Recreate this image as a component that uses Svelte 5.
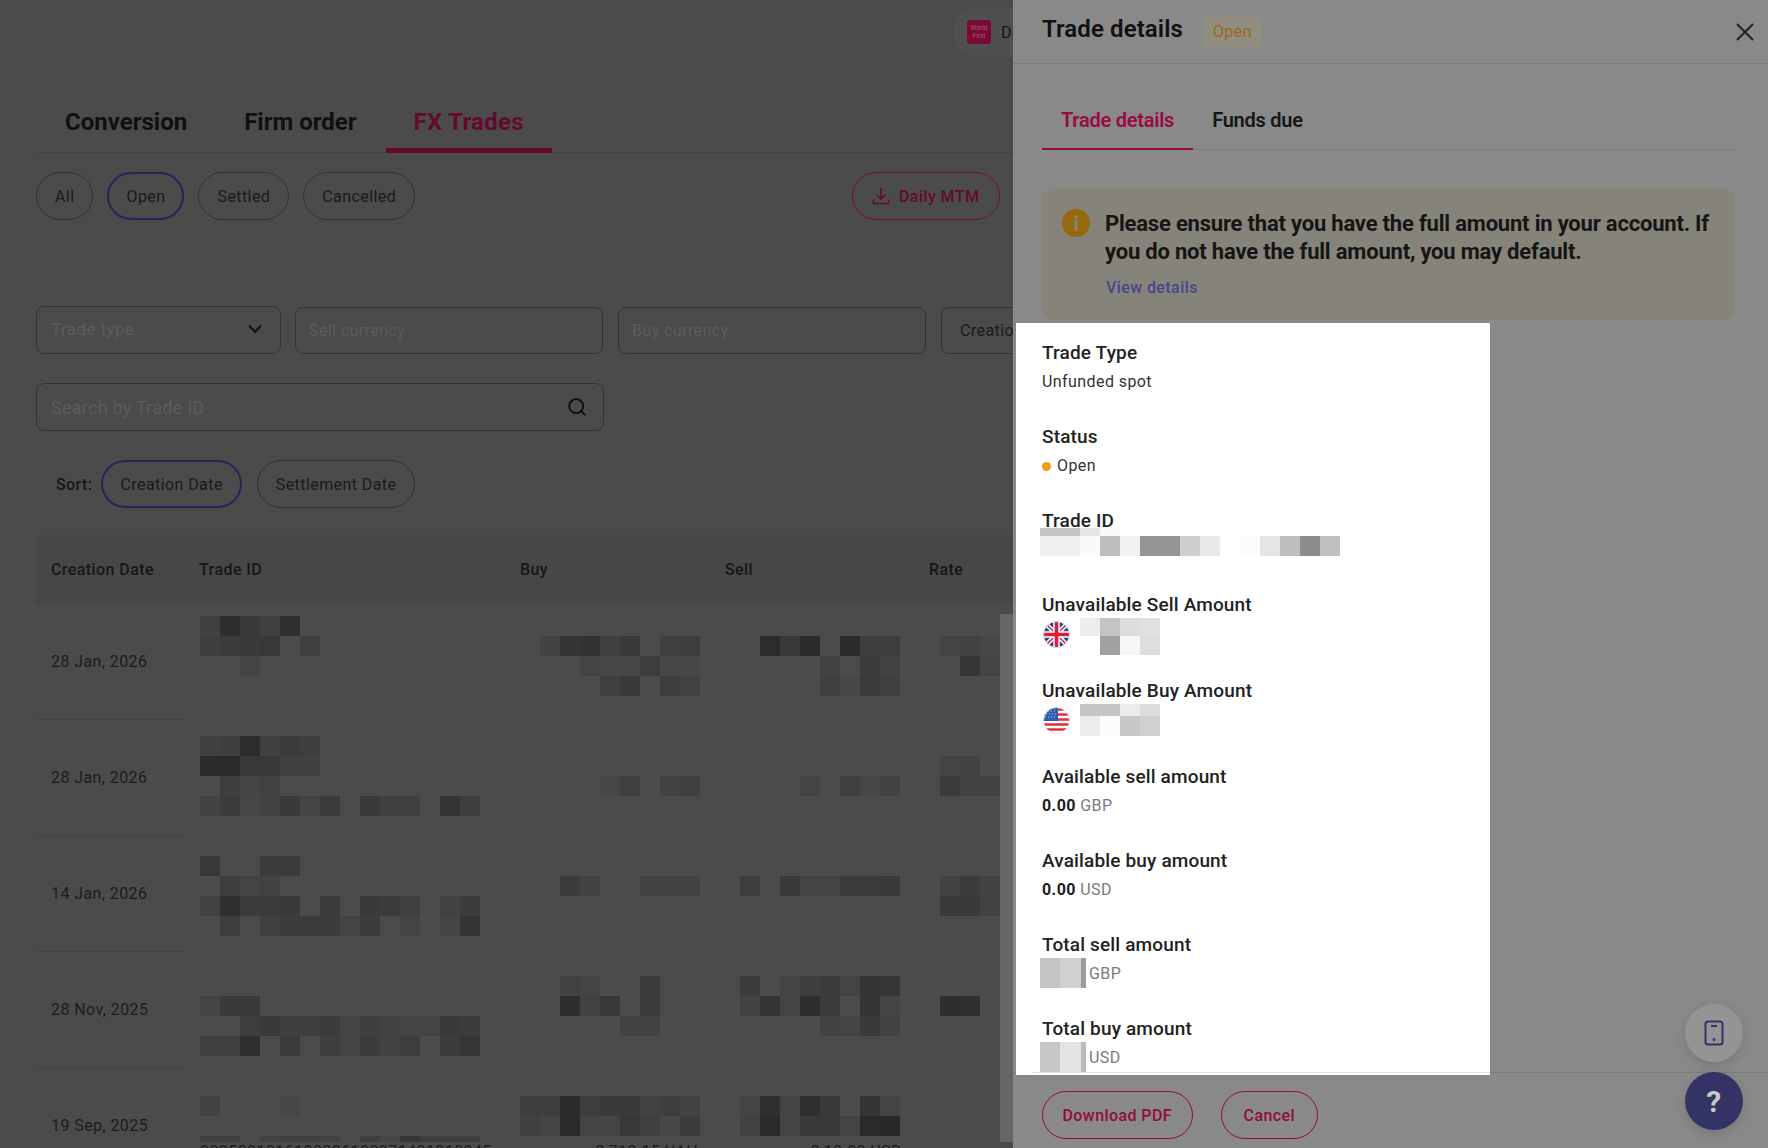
<script>
	// blurred-out values over the table: [y, first x, grey per 20px cell, "--" skips one]
	const BLUR = [
		[616, 200, "41 2e 3a 40 30"],
		[636, 200, "3e 3c 3a 38 -- 3f"],
		[656, 240, "45"],
		[636, 540, "43 35 32 40 3a -- 40 3e"],
		[656, 580, "44 47 47 3d 47 48"],
		[676, 600, "40 3a -- 3e 42"],
		[636, 760, "2c 39 2b -- 2b 3e 3e"],
		[656, 820, "42 -- 3c 42"],
		[676, 820, "40 48 3b 40"],
		[636, 940, "44 42 46"],
		[656, 960, "36 44"],

		[736, 200, "40 3e 2d 41 3c 3e"],
		[756, 200, "2b 2a 38 38 3f 40"],
		[776, 220, "3e 45 42"],
		[796, 200, "42 3c 46 42 3a 44 3c -- 3a 40 40 -- 34 3e"],
		[776, 600, "46 3f -- 42 40"],
		[776, 800, "44 -- 40 47 42"],
		[756, 940, "44 42"],
		[776, 940, "3c 42 42"],

		[856, 200, "38 -- -- 3c 3c"],
		[876, 220, "3e 44 42"],
		[896, 200, "42 30 3c 3c 3a -- 3c -- 3a 3c 40 -- 42 3c"],
		[916, 220, "3e -- 40 3c 3c 3c 44 3c -- 44 -- 45 34"],
		[876, 560, "3c 42 -- -- 42 42 42"],
		[876, 740, "3e -- 3a 44 44 3c 3c 3a"],
		[876, 940, "42 3c 42"],
		[896, 940, "3a 3a 42"],

		[976, 560, "42 44 -- -- 3c"],
		[976, 740, "3c -- 44 3e 3c 44 34 36"],
		[996, 200, "44 3a 3a"],
		[996, 560, "2e 42 38 -- 3c"],
		[996, 740, "42 34 44 2e 3c -- 34 44"],
		[996, 940, "2e 30"],
		[1016, 240, "3e 3a 3e 3e 3c 44 3e 42 44 44 3a 3c"],
		[1016, 620, "42 42"],
		[1016, 820, "42 44 3a 42"],
		[1036, 200, "40 40 30 -- 3c -- 3e 44 3c 42 3e -- 3c 36"],

		[1096, 200, "42 -- -- -- 46"],
		[1096, 520, "3e 3e 2b 3e 3a 3a 42 3e 42"],
		[1096, 740, "44 30 44 30 3a -- 34 44"],
		[1116, 520, "40 44 2b 44 44 38 40 48 3c"],
		[1116, 740, "42 2b 44 3a 3a 44 2a 28"],
		[1136, 200, "40 40 -- 42 40 40 42 -- 3e 46 36 3e 3e 3e", 6]
	];

	const blurCells = BLUR.flatMap(([y, x, greys, h = 20]) =>
		greys.split(" ").map((grey, i) => ({ y, x: x + i * 20, grey, h })).filter((c) => c.grey !== "--")
	);

	const chips = ["All", "Open", "Settled", "Cancelled"];
	const rows = ["28 Jan, 2026", "28 Jan, 2026", "14 Jan, 2026", "28 Nov, 2025", "19 Sep, 2025"];

	const sellBlur = [
		{ h: 18, cells: ["#ececec", "#c4c4c4", "#dcdcdc", "#e0e0e0"] },
		{ h: 19, cells: ["#ffffff", "#a0a0a0", "#f6f6f6", "#dedede"] }
	];
	const buyBlur = [
		{ h: 12, cells: ["#c4c4c4", "#c4c4c4", "#ececec", "#dcdcdc"] },
		{ h: 20, cells: ["#ececec", "#fcfcfc", "#c8c8c8", "#d0d0d0"] }
	];
	const idBlur = [
		{ h: 8, cells: ["#c4c4c4", "#c4c4c4", "#e6e6e6", "#fafafa"] },
		{
			h: 20,
			cells: ["#efefef", "#efefef", "#fafafa", "#bdbdbd", "#f2f2f2", "#959595", "#959595", "#cfcfcf", "#e9e9e9", "#ffffff", "#fcfcfc", "#e5e5e5", "#bebebe", "#8c8c8c", "#c0c0c0"]
		}
	];
</script>

{#snippet blur(lines, width = 20)}
	<div class="blur">
		{#each lines as line}
			<div class="blur-line" style="height:{line.h}px">
				{#each line.cells as color}
					<span style="width:{width}px;background:{color}"></span>
				{/each}
			</div>
		{/each}
	</div>
{/snippet}

<div class="page">
	<main class="main">
		<div class="topbar">
			<div class="brand">
				<span class="logo">World<br />First</span>
				<span class="brand-name">Demo</span>
			</div>
		</div>

		<nav class="tabs">
			<span class="tab">Conversion</span>
			<span class="tab">Firm order</span>
			<span class="tab active">FX Trades</span>
		</nav>

		<div class="chip-row">
			<div class="chips">
				{#each chips as chip}
					<span class="chip" class:selected={chip === "Open"}>{chip}</span>
				{/each}
			</div>
			<span class="mtm">
				<svg width="20" height="20" viewBox="0 0 20 20" fill="none" stroke="currentColor" stroke-width="1.5">
					<path d="M10 2v11M5.8 9l4.2 4.2L14.2 9M2.5 13.5v4h15v-4" />
				</svg>
				Daily MTM
			</span>
		</div>

		<div class="filters">
			<div class="field-box type">
				<span class="placeholder">Trade type</span>
				<svg width="16" height="10" viewBox="0 0 16 10" fill="none" stroke="#111" stroke-width="2">
					<path d="M2 1.5l6 6.5 6-6.5" />
				</svg>
			</div>
			<div class="field-box wide"><span class="placeholder">Sell currency</span></div>
			<div class="field-box wide"><span class="placeholder">Buy currency</span></div>
			<div class="field-box created">Creation date</div>
		</div>

		<div class="search">
			<span class="placeholder">Search by Trade ID</span>
			<svg width="20" height="20" viewBox="0 0 20 20" fill="none" stroke="#0c0c0c" stroke-width="1.8">
				<circle cx="9.2" cy="9.2" r="7" />
				<path d="M14.2 14.2l4 4" />
			</svg>
		</div>

		<div class="sort">
			<span class="sort-label">Sort:</span>
			<span class="chip selected">Creation Date</span>
			<span class="chip">Settlement Date</span>
		</div>

		<div class="table">
			<div class="thead">
				<span>Creation Date</span>
				<span class="divided">Trade ID</span>
				<span class="divided">Buy</span>
				<span class="divided">Sell</span>
				<span class="divided">Rate</span>
			</div>
			{#each rows as date, i}
				<div class="trow">
					<span class="date">{date}</span>
					{#if i === 4}
						<span class="clipped id">2025001016180006100071401010245</span>
						<span class="clipped amount">3,712.15 UAH</span>
						<span class="clipped amount">3,10.00 USD</span>
					{/if}
				</div>
			{/each}
		</div>

		<div class="blur-layer">
			{#each blurCells as c}
				<span style="left:{c.x}px;top:{c.y}px;height:{c.h}px;background:#{c.grey}{c.grey}{c.grey}"></span>
			{/each}
		</div>
		<div class="scrollbar"></div>
	</main>

	<aside class="drawer">
		<header class="drawer-head">
			<h2>Trade details</h2>
			<span class="badge">Open</span>
			<svg class="close" width="20" height="20" viewBox="0 0 20 20" fill="none" stroke="#222" stroke-width="2">
				<path d="M2 2l16 16M18 2L2 18" />
			</svg>
		</header>

		<nav class="drawer-tabs">
			<span class="drawer-tab active">Trade details</span>
			<span class="drawer-tab">Funds due</span>
		</nav>

		<section class="alert">
			<svg class="alert-icon" width="28" height="28" viewBox="0 0 28 28">
				<circle cx="14" cy="14" r="14" fill="#96690f" />
				<circle cx="14" cy="8" r="1.8" fill="#8a8579" />
				<rect x="12.5" y="11.5" width="3" height="10" fill="#8a8579" />
			</svg>
			<div>
				<p>Please ensure that you have the full amount in your account. If you do not have the full amount, you may default.</p>
				<span class="view">View details</span>
			</div>
		</section>

		<section class="details">
			<div class="item">
				<div class="label">Trade Type</div>
				<div class="value">Unfunded spot</div>
			</div>
			<div class="item">
				<div class="label">Status</div>
				<div class="value status"><i></i>Open</div>
			</div>
			<div class="item">
				<div class="label">Trade ID</div>
				<div class="id-blur">{@render blur(idBlur)}</div>
			</div>
			<div class="item tall">
				<div class="label">Unavailable Sell Amount</div>
				<div class="flag-row">
					<svg width="27" height="27" viewBox="0 0 27 27">
						<defs><clipPath id="uk"><circle cx="13.5" cy="13.5" r="13" /></clipPath></defs>
						<g clip-path="url(#uk)">
							<rect width="27" height="27" fill="#1f4a9c" />
							<path d="M0 0l27 27M27 0L0 27" stroke="#fff" stroke-width="4.5" />
							<path d="M0 0l27 27M27 0L0 27" stroke="#d3213f" stroke-width="1.5" />
							<path d="M13.5 0v27M0 13.5h27" stroke="#fff" stroke-width="6.5" />
							<path d="M13.5 0v27M0 13.5h27" stroke="#d3213f" stroke-width="3.6" />
						</g>
						<circle cx="13.5" cy="13.5" r="13" fill="none" stroke="#e4e4e4" />
					</svg>
					{@render blur(sellBlur)}
				</div>
			</div>
			<div class="item tall">
				<div class="label">Unavailable Buy Amount</div>
				<div class="flag-row">
					<svg width="27" height="27" viewBox="0 0 27 27">
						<defs><clipPath id="us"><circle cx="13.5" cy="13.5" r="13" /></clipPath></defs>
						<g clip-path="url(#us)">
							<rect width="27" height="27" fill="#fff" />
							<path d="M0 2.5h27M0 7.5h27M0 12.5h27M0 17.5h27M0 22.5h27" stroke="#dc2f3c" stroke-width="2.5" />
							<rect width="15" height="14" fill="#2d5cb0" />
							<path d="M2 4h12M3 7h11M2 10h12" stroke="#b9cbec" stroke-width="1" stroke-dasharray="1 2" />
						</g>
						<circle cx="13.5" cy="13.5" r="13" fill="none" stroke="#e4e4e4" />
					</svg>
					{@render blur(buyBlur)}
				</div>
			</div>
			<div class="item">
				<div class="label">Available sell amount</div>
				<div class="value"><b>0.00</b> <span class="unit">GBP</span></div>
			</div>
			<div class="item">
				<div class="label">Available buy amount</div>
				<div class="value"><b>0.00</b> <span class="unit">USD</span></div>
			</div>
			<div class="item">
				<div class="label">Total sell amount</div>
				<div class="total-row">
					<div class="total-blur one"></div>
					<span class="unit">GBP</span>
				</div>
			</div>
			<div class="item">
				<div class="label">Total buy amount</div>
				<div class="total-row">
					<div class="total-blur two"></div>
					<span class="unit">USD</span>
				</div>
			</div>
		</section>

		<footer class="drawer-foot">
			<span class="outline">Download PDF</span>
			<span class="outline cancel">Cancel</span>
		</footer>

		<div class="fab phone">
			<svg width="22" height="26" viewBox="0 0 22 26" fill="none" stroke="#33336b" stroke-width="2">
				<rect x="2.5" y="1.5" width="17" height="23" rx="2.5" />
				<path d="M8 6h6" />
				<circle cx="11" cy="19.5" r="0.6" />
			</svg>
		</div>
		<div class="fab help">?</div>
	</aside>
</div>

<style>
	:global(body) {
		margin: 0;
		background: #4b4b4b;
	}

	.page {
		display: flex;
		width: 1768px;
		height: 1148px;
		overflow: hidden;
		font-family: Roboto, "Liberation Sans", sans-serif;
		font-size: 16px;
		letter-spacing: 0.42px;
		color: #161616;
	}

	.main {
		position: relative;
		box-sizing: border-box;
		flex: 0 0 1013px;
		height: 1148px;
		padding: 0 13px 0 36px;
		overflow: hidden;
		background: #4b4b4b;
	}

	.topbar {
		display: flex;
		justify-content: flex-end;
		height: 64px;
		margin-right: -13px;
	}

	.brand {
		display: flex;
		align-items: center;
		box-sizing: border-box;
		width: 60px;
		height: 48px;
		margin-top: 8px;
		padding-left: 14px;
		gap: 10px;
		overflow: hidden;
		background: #4f4f4f;
		border-radius: 24px 0 0 24px;
		flex-shrink: 0;
		white-space: nowrap;
	}

	.logo {
		flex: 0 0 24px;
		height: 24px;
		border-radius: 4px;
		background: #7a0a35;
		color: #a65a75;
		font-size: 6.5px;
		letter-spacing: 0;
		line-height: 7.5px;
		text-align: center;
		padding-top: 5px;
		box-sizing: border-box;
	}

	.brand-name {
		color: #141414;
	}

	.tabs {
		display: flex;
		box-sizing: border-box;
		margin-top: 42px;
		margin-right: -13px;
		border-bottom: 1px solid #424242;
		height: 47px;
	}

	.tab {
		box-sizing: border-box;
		height: 47px;
		padding: 0 28px 0 29px;
		font-size: 24px;
		font-weight: 700;
		line-height: 32px;
		color: #101010;
		letter-spacing: 0;
	}

	.tab:nth-child(2) {
		padding: 0 29px;
	}

	.tab.active {
		padding: 0 28px;
		letter-spacing: 0.25px;
		color: #640a2e;
		border-bottom: 5px solid #640a2e;
	}

	.chip-row {
		display: flex;
		justify-content: space-between;
		margin-top: 19px;
	}

	.chips,
	.sort {
		display: flex;
		gap: 14px;
	}

	.chip {
		box-sizing: border-box;
		display: flex;
		align-items: center;
		height: 48px;
		padding: 0 18px;
		border: 1px solid #343434;
		border-radius: 24px;
		color: #1a1a1a;
		white-space: nowrap;
	}

	.chip.selected {
		border: 2px solid #26255a;
		padding: 0 17px;
	}

	.mtm {
		box-sizing: border-box;
		display: flex;
		align-items: center;
		gap: 8px;
		width: 148px;
		height: 48px;
		padding-left: 18px;
		border: 1px solid #7a0c39;
		border-radius: 24px;
		color: #640a2e;
		font-weight: 500;
		white-space: nowrap;
	}

	.filters {
		display: flex;
		align-items: flex-end;
		gap: 15px;
		margin-top: 86px;
		white-space: nowrap;
	}

	.field-box,
	.search {
		box-sizing: border-box;
		display: flex;
		align-items: center;
		justify-content: space-between;
		height: 47px;
		flex-shrink: 0;
		padding: 0 13px;
		border: 1px solid #343434;
		border-radius: 8px;
	}

	.field-box.type {
		width: 245px;
		height: 48px;
		margin-right: -1px;
		padding: 0 17px 3px 14px;
		font-size: 17px;
	}

	.field-box.wide {
		width: 308px;
	}

	.field-box.created {
		width: 200px;
		padding-left: 18px;
		color: #1a1a1a;
	}

	.placeholder {
		color: #5c5c5c;
	}

	.search {
		width: 568px;
		height: 48px;
		margin-top: 29px;
		padding: 0 16px 0 14px;
		font-size: 18px;
		letter-spacing: 0.25px;
	}

	.sort {
		align-items: center;
		margin-top: 29px;
		margin-left: 20px;
		gap: 15px;
	}

	.sort-label {
		font-weight: 500;
		margin-right: -6px;
	}

	.table {
		margin-top: 27px;
		margin-right: -13px;
	}

	.thead,
	.trow {
		display: grid;
		grid-template-columns: 147px 321px 205px 204px 1fr;
	}

	.thead {
		align-items: center;
		height: 69px;
		background: #474748;
		border-radius: 6px 6px 0 0;
		font-weight: 500;
	}

	.thead span {
		padding-left: 15px;
		line-height: 26px;
	}

	.thead .divided {
		border-left: 1px solid #434344;
	}

	.trow {
		position: relative;
		align-items: center;
		height: 116px;
	}

	.date {
		box-sizing: border-box;
		height: 116px;
		line-height: 115px;
		padding-left: 15px;
		border-bottom: 1px solid #424242;
		color: #1c1c1c;
	}

	.clipped {
		align-self: start;
		margin-top: 74px;
		line-height: 20px;
		color: #1c1c1c;
		white-space: nowrap;
	}

	.clipped.id {
		padding-left: 17px;
	}

	.clipped.amount {
		text-align: right;
		padding-right: 11px;
	}

	.blur-layer {
		position: absolute;
		inset: 0;
		pointer-events: none;
	}

	.blur-layer span {
		position: absolute;
		width: 20px;
	}

	.scrollbar {
		position: absolute;
		top: 614px;
		right: 0;
		width: 13px;
		height: 528px;
		background: #666666;
	}

	.drawer {
		position: relative;
		flex: 0 0 755px;
		height: 1148px;
		background: #898989;
	}

	.drawer-head {
		box-sizing: border-box;
		display: flex;
		align-items: center;
		height: 64px;
		padding: 0 13px 0 29px;
		border-bottom: 1px solid #7b7b7b;
	}

	h2 {
		margin: 0 0 6px;
		font-size: 24px;
		font-weight: 600;
		line-height: 32px;
		letter-spacing: 0.1px;
		color: #111;
	}

	.badge {
		margin-left: 20px;
		padding: 0 10px;
		height: 33px;
		line-height: 33px;
		border-radius: 6px;
		background: #918d80;
		color: #9a6814;
	}

	.close {
		margin-left: auto;
		margin-top: 1px;
	}

	.drawer-tabs {
		display: flex;
		box-sizing: border-box;
		width: 693px;
		height: 86px;
		margin-left: 29px;
		border-bottom: 1px solid #7b7b7b;
	}

	.drawer-tab {
		box-sizing: border-box;
		height: 86px;
		padding: 42px 19px 0;
		font-size: 20px;
		font-weight: 600;
		line-height: 28px;
		letter-spacing: -0.25px;
		color: #161616;
	}

	.drawer-tab.active {
		color: #980a42;
		border-bottom: 2px solid #980a42;
	}

	.alert {
		box-sizing: border-box;
		display: flex;
		gap: 15px;
		width: 693px;
		height: 132px;
		margin: 38px 0 0 29px;
		padding: 22px 20px 0;
		border-radius: 12px;
		background: #86847a;
	}

	.alert-icon {
		flex-shrink: 0;
		margin-top: -1px;
	}

	.alert p {
		margin: 0;
		font-size: 22px;
		font-weight: 700;
		line-height: 28px;
		letter-spacing: -0.2px;
		color: #151515;
	}

	.view {
		display: block;
		margin-top: 10px;
		margin-left: 1px;
		line-height: 24px;
		font-weight: 500;
		color: #47478a;
	}

	.details {
		position: relative;
		z-index: 1;
		box-sizing: border-box;
		width: 474px;
		height: 752px;
		margin: 3px 0 0 3px;
		padding: 16px 0 0 26px;
		overflow: hidden;
		background: #fff;
	}

	.details::after {
		content: "";
		position: absolute;
		left: 16px;
		right: 0;
		top: 749px;
		height: 1px;
		background: #e4e4e4;
	}

	.item {
		height: 84px;
	}

	.item.tall {
		height: 86px;
	}

	.label {
		font-size: 19px;
		font-weight: 500;
		line-height: 28px;
		letter-spacing: 0.15px;
		color: #222;
	}

	.value {
		padding-top: 1px;
		line-height: 28px;
		color: #333;
	}

	.status {
		display: flex;
		align-items: center;
	}

	.status i {
		width: 9px;
		height: 9px;
		margin-right: 6px;
		border-radius: 50%;
		background: #f39c12;
	}

	.value b {
		font-weight: 700;
		color: #1c1c1c;
	}

	.unit {
		color: #7a7a7a;
	}

	.blur {
		display: flex;
		flex-direction: column;
	}

	.blur-line {
		display: flex;
	}

	.id-blur {
		position: relative;
		margin: -7px 0 0 -2px;
	}

	.flag-row {
		display: flex;
		align-items: flex-start;
		gap: 10px;
		margin-top: -1px;
	}

	.flag-row svg {
		margin-top: 3px;
		margin-left: 1px;
	}

	.total-row {
		display: flex;
		align-items: center;
		gap: 3px;
		margin: -1px 0 0 -2px;
		height: 30px;
	}

	.total-blur {
		width: 46px;
		height: 30px;
	}

	.total-blur.one {
		background: linear-gradient(90deg, #c4c4c4 0 20px, #d0d0d0 20px 41px, #9c9c9c 41px);
	}

	.total-blur.two {
		background: linear-gradient(90deg, #c6c6c6 0 20px, #e4e4e4 20px 41px, #bbb 41px);
	}

	.drawer-foot {
		box-sizing: border-box;
		display: flex;
		gap: 28px;
		height: 76px;
		margin-top: -3px;
		padding: 18px 0 0 29px;
		border-top: 1px solid #7b7b7b;
	}

	.outline {
		box-sizing: border-box;
		display: flex;
		align-items: center;
		height: 48px;
		padding: 0 19.5px;
		border: 1px solid #930b40;
		border-radius: 24px;
		font-weight: 500;
		color: #930b40;
		white-space: nowrap;
	}

	.outline.cancel {
		padding: 0 22px;
	}

	.fab {
		position: absolute;
		z-index: 2;
		right: 25px;
		width: 58px;
		height: 58px;
		display: flex;
		align-items: center;
		justify-content: center;
		border-radius: 50%;
		box-shadow: 0 4px 12px rgba(0, 0, 0, 0.12);
	}

	.phone {
		top: 1004px;
		background: #949494;
	}

	.help {
		top: 1072px;
		background: #333366;
		color: #c9c9c9;
		font-size: 30px;
		font-weight: 700;
	}
</style>
